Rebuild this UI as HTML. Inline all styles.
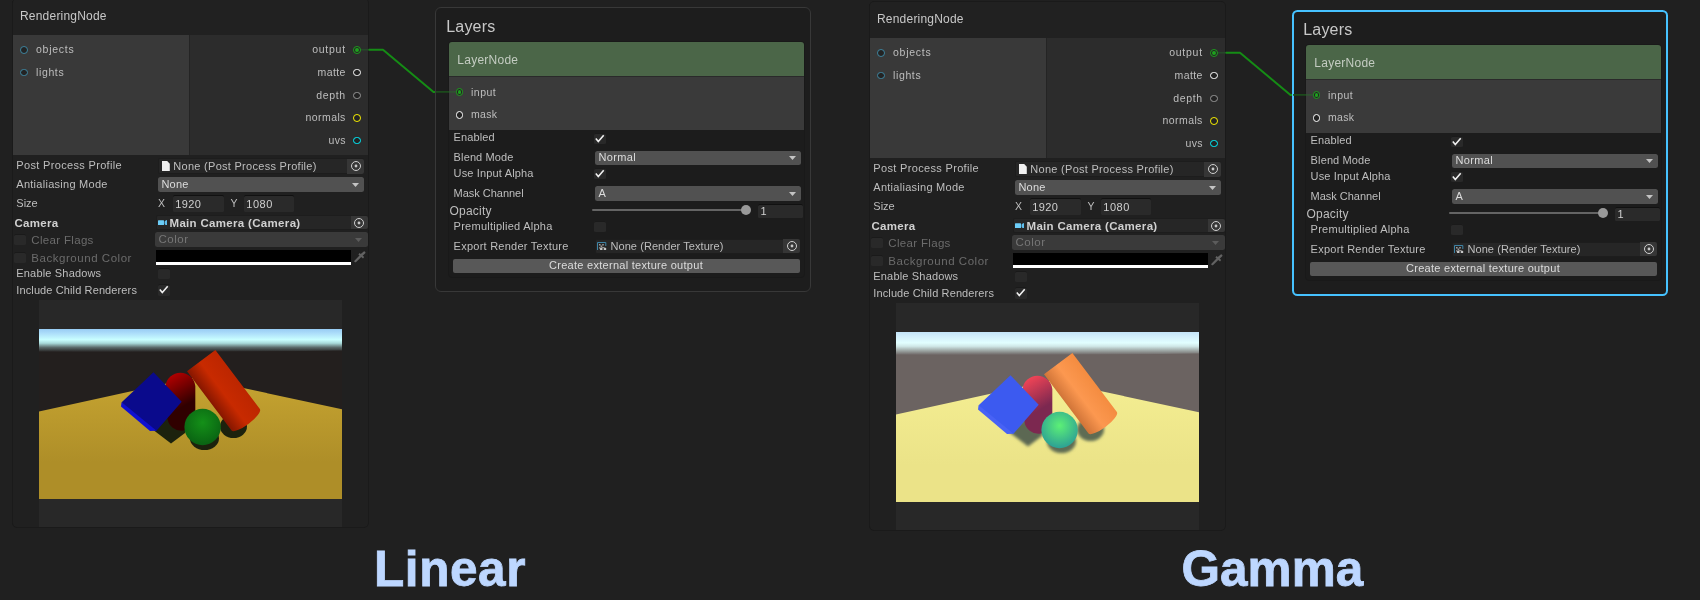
<!DOCTYPE html>
<html><head><meta charset="utf-8"><title>Linear vs Gamma</title>
<style>
html,body{margin:0;padding:0;background:#202020;}
body{width:1700px;height:600px;position:relative;overflow:hidden;font-family:"Liberation Sans", sans-serif;}
.g{position:absolute;width:0;height:0;will-change:transform;}
.b{position:absolute;display:block;}
.t{position:absolute;white-space:nowrap;line-height:20px;}
.cap .t{-webkit-text-stroke:0.8px #bdd7ff;}
</style></head><body>
<div class="g" style="left:0px;top:0px">
<div class="b" style="left:12px;top:-2px;width:357px;height:530px;background:#202020;border:1px solid #1a1a1a;border-radius:5px;box-sizing:border-box;"></div>
<div class="b" style="left:13px;top:-1px;width:355px;height:36px;background:#212121;border-radius:4px 4px 0 0;"></div>
<div class="b" style="left:13px;top:35px;width:176px;height:120px;background:#393939;"></div>
<div class="b" style="left:189px;top:35px;width:1px;height:120px;background:#242424;"></div>
<div class="b" style="left:190px;top:35px;width:178px;height:120px;background:#2c2c2c;"></div>
<div class="b" style="left:20.40px;top:45.80px;width:7.8px;height:7.8px;border-radius:50%;box-sizing:border-box;border:1px solid #3f87a2;background:#232323"></div>
<div class="b" style="left:20.40px;top:68.60px;width:7.8px;height:7.8px;border-radius:50%;box-sizing:border-box;border:1px solid #3f87a2;background:#232323"></div>
<div class="b" style="left:353.10px;top:45.90px;width:7.8px;height:7.8px;border-radius:50%;box-sizing:border-box;border:1.3px solid #1ea01e;background:#232323"></div><div class="b" style="left:355.10px;top:47.90px;width:3.8px;height:3.8px;border-radius:50%;background:#1ea01e"></div>
<div class="b" style="left:353.10px;top:68.50px;width:7.8px;height:7.8px;border-radius:50%;box-sizing:border-box;border:1.7px solid #ffffff;background:#232323"></div>
<div class="b" style="left:353.10px;top:91.60px;width:7.8px;height:7.8px;border-radius:50%;box-sizing:border-box;border:1.1px solid #969696;background:#232323"></div>
<div class="b" style="left:353.10px;top:114.00px;width:7.8px;height:7.8px;border-radius:50%;box-sizing:border-box;border:1.4px solid #fff600;background:#232323"></div>
<div class="b" style="left:353.10px;top:136.70px;width:7.8px;height:7.8px;border-radius:50%;box-sizing:border-box;border:1.4px solid #00f2ff;background:#232323"></div>
<div class="b" style="left:157.7px;top:158.3px;width:206.3px;height:15.8px;background:#262626;border-radius:2px;box-shadow:inset 0 0 0 1px #1d1d1d;"></div><div class="b" style="left:347.0px;top:158.8px;width:17px;height:14.8px;background:#363636;border-radius:0 2px 2px 0;"></div>
<svg class="b" style="left:161.8px;top:160.8px" width="8" height="10.2" viewBox="0 0 8 10.2"><path d="M0 0H5.2L7.8 2.8V10.2H0Z" fill="#f0f0f0"/></svg>
<svg class="b" style="left:349.9px;top:160.4px" width="12" height="12" viewBox="0 0 12 12"><circle cx="6" cy="6" r="4.5" fill="none" stroke="#d0d0d0" stroke-width="1"/><circle cx="6" cy="6" r="1.4" fill="#c8c8c8"/></svg>
<div class="b" style="left:157.7px;top:177px;width:206.3px;height:14.5px;background:#515151;border-radius:2.5px;"></div><svg class="b" style="left:351.5px;top:182.75px" width="7" height="4" viewBox="0 0 7 4"><path d="M0 0H7L3.5 4Z" fill="#c4c4c4"/></svg>
<div class="b" style="left:173px;top:195px;width:51px;height:16.5px;background:#2a2a2a;border-radius:1.5px;box-shadow:inset 0 1px 0 #111;"></div>
<div class="b" style="left:244px;top:195px;width:50px;height:16.5px;background:#2a2a2a;border-radius:1.5px;box-shadow:inset 0 1px 0 #111;"></div>
<div class="b" style="left:156px;top:215px;width:211.5px;height:14.8px;background:#262626;border-radius:2px;box-shadow:inset 0 0 0 1px #1d1d1d;"></div><div class="b" style="left:350.5px;top:215.5px;width:17px;height:13.8px;background:#363636;border-radius:0 2px 2px 0;"></div>
<svg class="b" style="left:158px;top:219.7px" width="9.2" height="5.6" viewBox="0 0 9.2 5.6"><rect y="0.2" width="6" height="5.2" rx="0.5" fill="#6ccdf8"/><path d="M6.6 1.6Q7.6 0.2 9 0V5.6Q7.6 5.4 6.6 4Z" fill="#5fc0f0"/></svg>
<svg class="b" style="left:352.7px;top:216.5px" width="12" height="12" viewBox="0 0 12 12"><circle cx="6" cy="6" r="4.5" fill="none" stroke="#d0d0d0" stroke-width="1"/><circle cx="6" cy="6" r="1.4" fill="#c8c8c8"/></svg>
<div class="b" style="left:155.4px;top:231.5px;width:212.3px;height:15.5px;background:#3a3a3a;border-radius:2.5px;"></div><svg class="b" style="left:355.20000000000005px;top:237.75px" width="7" height="4" viewBox="0 0 7 4"><path d="M0 0H7L3.5 4Z" fill="#5c5c5c"/></svg>
<div class="b" style="left:14px;top:233.7px;width:11.5px;height:11.3px;background:#292929;border-radius:1.5px;box-shadow:inset 0 1px 0 #1a1a1a;"></div>
<div class="b" style="left:14px;top:252px;width:11.5px;height:11.3px;background:#292929;border-radius:1.5px;box-shadow:inset 0 1px 0 #1a1a1a;"></div>
<div class="b" style="left:155.7px;top:250px;width:195.3px;height:12px;background:#000;"></div>
<div class="b" style="left:155.7px;top:262px;width:195.3px;height:3px;background:#fff;"></div>
<svg class="b" style="left:354px;top:251px" width="12" height="12" viewBox="0 0 12 12"><g stroke="#626262" fill="none" stroke-linecap="round"><path d="M1.4 10.2L7 4.6" stroke-width="2.2"/><path d="M7.6 4L10.2 1.6" stroke-width="2.4"/></g><path d="M5 2.8L9.6 6.8" stroke="#626262" stroke-width="1.8"/></svg>
<div class="b" style="left:158px;top:267.5px;width:11.5px;height:11.3px;background:#292929;border-radius:1.5px;box-shadow:inset 0 1px 0 #1a1a1a;"></div>
<div class="b" style="left:158px;top:284.3px;width:11.5px;height:11.3px;background:#292929;border-radius:1.5px;box-shadow:inset 0 1px 0 #1a1a1a;"></div><svg class="b" style="left:158px;top:284.3px" width="12" height="12" viewBox="0 0 12 12"><path d="M1.8 5.6 L4.3 8.5 L9.7 2.3" fill="none" stroke="#f0f0f0" stroke-width="1.6"/></svg>
<div class="b" style="left:39px;top:300px;width:303px;height:227px;background:#282828;"></div>
<svg class="b" style="left:39px;top:329px" width="303" height="170" viewBox="0 0 303 170">
<defs>
<linearGradient id="skylinear" x1="0" y1="0" x2="0" y2="1">
<stop offset="0" stop-color="#98ccf4"/><stop offset="0.2" stop-color="#aedffa"/><stop offset="0.47" stop-color="#c9ffff"/>
<stop offset="0.62" stop-color="#a8dada"/><stop offset="0.8" stop-color="#5c6c6c"/><stop offset="1" stop-color="#252121"/></linearGradient>
<linearGradient id="grlinear" x1="0" y1="0" x2="0" y2="1"><stop offset="0" stop-color="#c6a431"/><stop offset="0.7" stop-color="#ae8e28"/></linearGradient>
<linearGradient id="rdlinear" x1="0" y1="0" x2="0.3" y2="1"><stop offset="0.1" stop-color="#b00000"/><stop offset="0.7" stop-color="#300000"/></linearGradient>
<linearGradient id="cylinear" x1="0" y1="0" x2="1" y2="0"><stop offset="0" stop-color="#861600"/><stop offset="0.45" stop-color="#c82a00"/><stop offset="1" stop-color="#bc2600"/></linearGradient>
<radialGradient id="splinear" cx="0.5" cy="0.38" r="0.65"><stop offset="0" stop-color="#149018"/><stop offset="1" stop-color="#096012"/></radialGradient>
<filter id="bllinear"><feGaussianBlur stdDeviation="0.7"/></filter>
</defs>
<rect width="303" height="170" fill="#231f1e"/>
<path d="M0 0H303V21.5Q151 23.5 0 22.8Z" fill="url(#skylinear)"/>
<path d="M0 82.6 L155 48.5 L303 80.2 V170 H0Z" fill="url(#grlinear)"/>
<g filter="url(#bllinear)">
<path d="M113 100 L132 114.5 L146 104 L150 92 L130 86Z" fill="#1a2210"/>
<ellipse cx="165.5" cy="109.5" rx="14.5" ry="11.5" fill="#1c2410"/>
<ellipse cx="194.5" cy="97.5" rx="13.5" ry="11.5" fill="#1c2410"/>
</g>
<path d="M126.5 57 A15 15 0 0 1 156.3 57 L156.3 88 A14 14 0 0 1 128.5 90Z" fill="url(#rdlinear)"/>
<g transform="translate(148,42.3) rotate(-37)"><path d="M0 0 H35.5 V74 A17.75 5 0 0 1 0 74Z" fill="url(#cylinear)"/></g>
<path d="M82.5 73.3 L82 77.5 L111 102 L117.5 101.8 L114 80Z" fill="#1010d0"/>
<path d="M114.5 43.3 L142.7 72.8 L117.5 101.8 L82.7 73.3Z" fill="#0a0a8c"/>
<circle cx="163.6" cy="98" r="18.2" fill="url(#splinear)"/>
</svg>
<svg class="b" style="left:350px;top:40px" width="120" height="60" viewBox="350 40 120 60"><path d="M361 49.7 H369" fill="none" stroke="#27482a" stroke-width="1.6"/><path d="M368.7 49.7 H383 L433.5 91.9 H435.5" fill="none" stroke="#158c15" stroke-width="2" stroke-linejoin="round"/></svg>
<div class="b" style="left:435px;top:7px;width:376px;height:285px;background:#1d1d1d;border:1px solid #383838;border-radius:6px;box-sizing:border-box;"></div>
<div class="b" style="left:448px;top:41px;width:357px;height:237px;background:#1c1c1c;border:1px solid #191919;border-radius:4px;box-sizing:border-box;"></div>
<div class="b" style="left:449px;top:42px;width:355px;height:34px;background:#4b6648;border-radius:3px 3px 0 0;"></div>
<div class="b" style="left:449px;top:76px;width:355px;height:1px;background:#2a2a2a;"></div>
<div class="b" style="left:449px;top:77px;width:355px;height:53px;background:#3a3a3a;"></div>
<svg class="b" style="left:435px;top:88px" width="26" height="8" viewBox="435 88 26 8"><path d="M436 91.9 H449" fill="none" stroke="#1c501c" stroke-width="1.6"/><path d="M449 91.9 H456" fill="none" stroke="#2f5a30" stroke-width="1.3"/></svg>
<div class="b" style="left:455.70px;top:88.30px;width:7.8px;height:7.8px;border-radius:50%;box-sizing:border-box;border:1.3px solid #1ea01e;background:#232323"></div><div class="b" style="left:457.70px;top:90.30px;width:3.8px;height:3.8px;border-radius:50%;background:#1ea01e"></div>
<div class="b" style="left:455.70px;top:111.10px;width:7.8px;height:7.8px;border-radius:50%;box-sizing:border-box;border:1.7px solid #ffffff;background:#232323"></div>
<div class="b" style="left:594.3px;top:133px;width:11.5px;height:11.3px;background:#292929;border-radius:1.5px;box-shadow:inset 0 1px 0 #1a1a1a;"></div><svg class="b" style="left:594.3px;top:133px" width="12" height="12" viewBox="0 0 12 12"><path d="M1.8 5.6 L4.3 8.5 L9.7 2.3" fill="none" stroke="#f0f0f0" stroke-width="1.6"/></svg>
<div class="b" style="left:595px;top:150.7px;width:206px;height:14px;background:#515151;border-radius:2.5px;"></div><svg class="b" style="left:788.5px;top:156.2px" width="7" height="4" viewBox="0 0 7 4"><path d="M0 0H7L3.5 4Z" fill="#c4c4c4"/></svg>
<div class="b" style="left:594.3px;top:167.8px;width:11.5px;height:11.3px;background:#292929;border-radius:1.5px;box-shadow:inset 0 1px 0 #1a1a1a;"></div><svg class="b" style="left:594.3px;top:167.8px" width="12" height="12" viewBox="0 0 12 12"><path d="M1.8 5.6 L4.3 8.5 L9.7 2.3" fill="none" stroke="#f0f0f0" stroke-width="1.6"/></svg>
<div class="b" style="left:595px;top:186px;width:206px;height:14.5px;background:#515151;border-radius:2.5px;"></div><svg class="b" style="left:788.5px;top:191.75px" width="7" height="4" viewBox="0 0 7 4"><path d="M0 0H7L3.5 4Z" fill="#c4c4c4"/></svg>
<div class="b" style="left:592px;top:209.4px;width:155px;height:1.8px;background:#646464;border-radius:1px;"></div>
<div class="b" style="left:741.3px;top:205.4px;width:10px;height:10px;background:#999999;border-radius:50%;"></div>
<div class="b" style="left:757.7px;top:203.5px;width:45px;height:14.5px;background:#2a2a2a;border-radius:1.5px;box-shadow:inset 0 1px 0 #111;"></div>
<div class="b" style="left:594.3px;top:220.5px;width:11.5px;height:11.3px;background:#292929;border-radius:1.5px;box-shadow:inset 0 1px 0 #1a1a1a;"></div>
<div class="b" style="left:595px;top:238.8px;width:205px;height:15.2px;background:#262626;border-radius:2px;box-shadow:inset 0 0 0 1px #1d1d1d;"></div><div class="b" style="left:783px;top:239.3px;width:17px;height:14.2px;background:#363636;border-radius:0 2px 2px 0;"></div>
<svg class="b" style="left:597px;top:241.7px" width="9.5" height="8.8" viewBox="0 0 9.5 8.8"><path d="M0.5 8V0.5H8.8V4" fill="none" stroke="#3f86a8" stroke-width="1"/><path d="M2 2h1.6v1.6H2zM5.2 2h1.6v1.6H5.2zM3.6 3.6h1.6v1.6H3.6zM2 5.2h1.4v1.2H2z" fill="#9a9a9a"/><ellipse cx="6.1" cy="7" rx="3.2" ry="1.8" fill="#c8c8c8"/><circle cx="6.1" cy="7" r="1" fill="#3a3a3a"/></svg>
<svg class="b" style="left:785.5px;top:240.4px" width="12" height="12" viewBox="0 0 12 12"><circle cx="6" cy="6" r="4.5" fill="none" stroke="#d0d0d0" stroke-width="1"/><circle cx="6" cy="6" r="1.4" fill="#c8c8c8"/></svg>
<div class="b" style="left:452.7px;top:259px;width:347px;height:14px;background:#585858;border-radius:2px;"></div>
<span class="t" style="left:20.00px;top:6.00px;font-size:12px;color:#c8c8c8;letter-spacing:0.203px;">RenderingNode</span>
<span class="t" style="left:36.00px;top:39.00px;font-size:10.5px;color:#bebebe;letter-spacing:0.731px;">objects</span>
<span class="t" style="left:36.00px;top:62.00px;font-size:10.5px;color:#bebebe;letter-spacing:0.631px;">lights</span>
<span class="t" style="left:312.20px;top:39.00px;font-size:10.5px;color:#bebebe;letter-spacing:0.733px;">output</span>
<span class="t" style="left:317.60px;top:62.00px;font-size:10.5px;color:#bebebe;letter-spacing:0.387px;">matte</span>
<span class="t" style="left:316.20px;top:85.00px;font-size:10.5px;color:#bebebe;letter-spacing:0.664px;">depth</span>
<span class="t" style="left:305.60px;top:107.00px;font-size:10.5px;color:#bebebe;letter-spacing:0.406px;">normals</span>
<span class="t" style="left:328.60px;top:130.00px;font-size:10.5px;color:#bebebe;letter-spacing:0.285px;">uvs</span>
<span class="t" style="left:16.30px;top:155.00px;font-size:11px;color:#bebebe;letter-spacing:0.333px;">Post Process Profile</span>
<span class="t" style="left:16.30px;top:174.00px;font-size:11px;color:#bebebe;letter-spacing:0.268px;">Antialiasing Mode</span>
<span class="t" style="left:16.30px;top:193.00px;font-size:11px;color:#bebebe;">Size</span>
<span class="t" style="left:14.40px;top:213.00px;font-size:11.5px;color:#d0d0d0;letter-spacing:0.299px;font-weight:bold;">Camera</span>
<span class="t" style="left:31.30px;top:230.00px;font-size:11.5px;color:#6b6b6b;letter-spacing:0.326px;">Clear Flags</span>
<span class="t" style="left:31.30px;top:248.00px;font-size:11.5px;color:#6b6b6b;letter-spacing:0.540px;">Background Color</span>
<span class="t" style="left:16.30px;top:263.00px;font-size:11px;color:#bebebe;letter-spacing:0.174px;">Enable Shadows</span>
<span class="t" style="left:16.30px;top:280.00px;font-size:11px;color:#bebebe;letter-spacing:0.117px;">Include Child Renderers</span>
<span class="t" style="left:173.30px;top:156.00px;font-size:11px;color:#bebebe;letter-spacing:0.284px;">None (Post Process Profile)</span>
<span class="t" style="left:161.50px;top:174.00px;font-size:11px;color:#dcdcdc;letter-spacing:0.176px;">None</span>
<span class="t" style="left:158.00px;top:193.00px;font-size:10.5px;color:#bebebe;">X</span>
<span class="t" style="left:175.30px;top:194.00px;font-size:11px;color:#d0d0d0;letter-spacing:0.404px;">1920</span>
<span class="t" style="left:230.50px;top:193.00px;font-size:10.5px;color:#bebebe;">Y</span>
<span class="t" style="left:246.30px;top:194.00px;font-size:11px;color:#d0d0d0;letter-spacing:0.529px;">1080</span>
<span class="t" style="left:169.50px;top:213.00px;font-size:11.5px;color:#d0d0d0;letter-spacing:0.318px;font-weight:bold;">Main Camera (Camera)</span>
<span class="t" style="left:158.50px;top:229.00px;font-size:11.5px;color:#767676;letter-spacing:0.503px;">Color</span>
<span class="t" style="left:446.20px;top:16.50px;font-size:16px;color:#c8c8c8;letter-spacing:0.211px;">Layers</span>
<span class="t" style="left:457.30px;top:50.00px;font-size:12px;color:#c4ccc2;letter-spacing:0.253px;">LayerNode</span>
<span class="t" style="left:471.00px;top:82.00px;font-size:10.5px;color:#bebebe;letter-spacing:0.484px;">input</span>
<span class="t" style="left:471.00px;top:104.00px;font-size:10.5px;color:#bebebe;letter-spacing:0.327px;">mask</span>
<span class="t" style="left:453.60px;top:127.00px;font-size:11px;color:#bebebe;letter-spacing:0.089px;">Enabled</span>
<span class="t" style="left:453.60px;top:147.00px;font-size:11px;color:#bebebe;letter-spacing:0.128px;">Blend Mode</span>
<span class="t" style="left:453.60px;top:163.00px;font-size:11px;color:#bebebe;letter-spacing:0.155px;">Use Input Alpha</span>
<span class="t" style="left:453.60px;top:183.00px;font-size:11px;color:#bebebe;letter-spacing:-0.027px;">Mask Channel</span>
<span class="t" style="left:449.60px;top:201.00px;font-size:12px;color:#bebebe;letter-spacing:0.188px;">Opacity</span>
<span class="t" style="left:453.60px;top:216.00px;font-size:11px;color:#bebebe;letter-spacing:0.254px;">Premultiplied Alpha</span>
<span class="t" style="left:453.60px;top:236.00px;font-size:11px;color:#bebebe;letter-spacing:0.245px;">Export Render Texture</span>
<span class="t" style="left:598.50px;top:147.00px;font-size:11px;color:#dcdcdc;letter-spacing:0.341px;">Normal</span>
<span class="t" style="left:598.50px;top:183.00px;font-size:11px;color:#dcdcdc;">A</span>
<span class="t" style="left:760.50px;top:201.00px;font-size:11px;color:#d0d0d0;">1</span>
<span class="t" style="left:610.50px;top:236.00px;font-size:11px;color:#bebebe;letter-spacing:0.062px;">None (Render Texture)</span>
<span class="t" style="left:549.00px;top:255.00px;font-size:11px;color:#dcdcdc;letter-spacing:0.282px;">Create external texture output</span>
</div>
<div class="g" style="left:857px;top:3px">
<div class="b" style="left:12px;top:-2px;width:357px;height:530px;background:#202020;border:1px solid #1a1a1a;border-radius:5px;box-sizing:border-box;"></div>
<div class="b" style="left:13px;top:-1px;width:355px;height:36px;background:#212121;border-radius:4px 4px 0 0;"></div>
<div class="b" style="left:13px;top:35px;width:176px;height:120px;background:#393939;"></div>
<div class="b" style="left:189px;top:35px;width:1px;height:120px;background:#242424;"></div>
<div class="b" style="left:190px;top:35px;width:178px;height:120px;background:#2c2c2c;"></div>
<div class="b" style="left:20.40px;top:45.80px;width:7.8px;height:7.8px;border-radius:50%;box-sizing:border-box;border:1px solid #3f87a2;background:#232323"></div>
<div class="b" style="left:20.40px;top:68.60px;width:7.8px;height:7.8px;border-radius:50%;box-sizing:border-box;border:1px solid #3f87a2;background:#232323"></div>
<div class="b" style="left:353.10px;top:45.90px;width:7.8px;height:7.8px;border-radius:50%;box-sizing:border-box;border:1.3px solid #1ea01e;background:#232323"></div><div class="b" style="left:355.10px;top:47.90px;width:3.8px;height:3.8px;border-radius:50%;background:#1ea01e"></div>
<div class="b" style="left:353.10px;top:68.50px;width:7.8px;height:7.8px;border-radius:50%;box-sizing:border-box;border:1.7px solid #ffffff;background:#232323"></div>
<div class="b" style="left:353.10px;top:91.60px;width:7.8px;height:7.8px;border-radius:50%;box-sizing:border-box;border:1.1px solid #969696;background:#232323"></div>
<div class="b" style="left:353.10px;top:114.00px;width:7.8px;height:7.8px;border-radius:50%;box-sizing:border-box;border:1.4px solid #fff600;background:#232323"></div>
<div class="b" style="left:353.10px;top:136.70px;width:7.8px;height:7.8px;border-radius:50%;box-sizing:border-box;border:1.4px solid #00f2ff;background:#232323"></div>
<div class="b" style="left:157.7px;top:158.3px;width:206.3px;height:15.8px;background:#262626;border-radius:2px;box-shadow:inset 0 0 0 1px #1d1d1d;"></div><div class="b" style="left:347.0px;top:158.8px;width:17px;height:14.8px;background:#363636;border-radius:0 2px 2px 0;"></div>
<svg class="b" style="left:161.8px;top:160.8px" width="8" height="10.2" viewBox="0 0 8 10.2"><path d="M0 0H5.2L7.8 2.8V10.2H0Z" fill="#f0f0f0"/></svg>
<svg class="b" style="left:349.9px;top:160.4px" width="12" height="12" viewBox="0 0 12 12"><circle cx="6" cy="6" r="4.5" fill="none" stroke="#d0d0d0" stroke-width="1"/><circle cx="6" cy="6" r="1.4" fill="#c8c8c8"/></svg>
<div class="b" style="left:157.7px;top:177px;width:206.3px;height:14.5px;background:#515151;border-radius:2.5px;"></div><svg class="b" style="left:351.5px;top:182.75px" width="7" height="4" viewBox="0 0 7 4"><path d="M0 0H7L3.5 4Z" fill="#c4c4c4"/></svg>
<div class="b" style="left:173px;top:195px;width:51px;height:16.5px;background:#2a2a2a;border-radius:1.5px;box-shadow:inset 0 1px 0 #111;"></div>
<div class="b" style="left:244px;top:195px;width:50px;height:16.5px;background:#2a2a2a;border-radius:1.5px;box-shadow:inset 0 1px 0 #111;"></div>
<div class="b" style="left:156px;top:215px;width:211.5px;height:14.8px;background:#262626;border-radius:2px;box-shadow:inset 0 0 0 1px #1d1d1d;"></div><div class="b" style="left:350.5px;top:215.5px;width:17px;height:13.8px;background:#363636;border-radius:0 2px 2px 0;"></div>
<svg class="b" style="left:158px;top:219.7px" width="9.2" height="5.6" viewBox="0 0 9.2 5.6"><rect y="0.2" width="6" height="5.2" rx="0.5" fill="#6ccdf8"/><path d="M6.6 1.6Q7.6 0.2 9 0V5.6Q7.6 5.4 6.6 4Z" fill="#5fc0f0"/></svg>
<svg class="b" style="left:352.7px;top:216.5px" width="12" height="12" viewBox="0 0 12 12"><circle cx="6" cy="6" r="4.5" fill="none" stroke="#d0d0d0" stroke-width="1"/><circle cx="6" cy="6" r="1.4" fill="#c8c8c8"/></svg>
<div class="b" style="left:155.4px;top:231.5px;width:212.3px;height:15.5px;background:#3a3a3a;border-radius:2.5px;"></div><svg class="b" style="left:355.20000000000005px;top:237.75px" width="7" height="4" viewBox="0 0 7 4"><path d="M0 0H7L3.5 4Z" fill="#5c5c5c"/></svg>
<div class="b" style="left:14px;top:233.7px;width:11.5px;height:11.3px;background:#292929;border-radius:1.5px;box-shadow:inset 0 1px 0 #1a1a1a;"></div>
<div class="b" style="left:14px;top:252px;width:11.5px;height:11.3px;background:#292929;border-radius:1.5px;box-shadow:inset 0 1px 0 #1a1a1a;"></div>
<div class="b" style="left:155.7px;top:250px;width:195.3px;height:12px;background:#000;"></div>
<div class="b" style="left:155.7px;top:262px;width:195.3px;height:3px;background:#fff;"></div>
<svg class="b" style="left:354px;top:251px" width="12" height="12" viewBox="0 0 12 12"><g stroke="#626262" fill="none" stroke-linecap="round"><path d="M1.4 10.2L7 4.6" stroke-width="2.2"/><path d="M7.6 4L10.2 1.6" stroke-width="2.4"/></g><path d="M5 2.8L9.6 6.8" stroke="#626262" stroke-width="1.8"/></svg>
<div class="b" style="left:158px;top:267.5px;width:11.5px;height:11.3px;background:#292929;border-radius:1.5px;box-shadow:inset 0 1px 0 #1a1a1a;"></div>
<div class="b" style="left:158px;top:284.3px;width:11.5px;height:11.3px;background:#292929;border-radius:1.5px;box-shadow:inset 0 1px 0 #1a1a1a;"></div><svg class="b" style="left:158px;top:284.3px" width="12" height="12" viewBox="0 0 12 12"><path d="M1.8 5.6 L4.3 8.5 L9.7 2.3" fill="none" stroke="#f0f0f0" stroke-width="1.6"/></svg>
<div class="b" style="left:39px;top:300px;width:303px;height:227px;background:#282828;"></div>
<svg class="b" style="left:39px;top:329px" width="303" height="170" viewBox="0 0 303 170">
<defs>
<linearGradient id="skygamma" x1="0" y1="0" x2="0" y2="1">
<stop offset="0" stop-color="#c4e4f8"/><stop offset="0.2" stop-color="#d2effc"/><stop offset="0.47" stop-color="#e2ffff"/>
<stop offset="0.62" stop-color="#d0e8e8"/><stop offset="0.8" stop-color="#a0aaa8"/><stop offset="1" stop-color="#6c6463"/></linearGradient>
<linearGradient id="grgamma" x1="0" y1="0" x2="0" y2="1"><stop offset="0" stop-color="#f4ee92"/><stop offset="0.7" stop-color="#ebe388"/></linearGradient>
<linearGradient id="rdgamma" x1="0" y1="0" x2="0.3" y2="1"><stop offset="0.1" stop-color="#f04456"/><stop offset="0.7" stop-color="#7c2850"/></linearGradient>
<linearGradient id="cygamma" x1="0" y1="0" x2="1" y2="0"><stop offset="0" stop-color="#d07438"/><stop offset="0.45" stop-color="#fc9850"/><stop offset="1" stop-color="#f48c40"/></linearGradient>
<radialGradient id="spgamma" cx="0.5" cy="0.38" r="0.65"><stop offset="0" stop-color="#5cf076"/><stop offset="1" stop-color="#2a9c96"/></radialGradient>
<filter id="blgamma"><feGaussianBlur stdDeviation="1.5"/></filter>
</defs>
<rect width="303" height="170" fill="#6b6361"/>
<path d="M0 0H303V21.5Q151 23.5 0 22.8Z" fill="url(#skygamma)"/>
<path d="M0 82.6 L155 48.5 L303 80.2 V170 H0Z" fill="url(#grgamma)"/>
<g filter="url(#blgamma)">
<path d="M113 100 L132 114.5 L146 104 L150 92 L130 86Z" fill="#5c6852"/>
<ellipse cx="165.5" cy="109.5" rx="14.5" ry="11.5" fill="#5e6c52"/>
<ellipse cx="194.5" cy="97.5" rx="13.5" ry="11.5" fill="#5e6c52"/>
</g>
<path d="M126.5 57 A15 15 0 0 1 156.3 57 L156.3 88 A14 14 0 0 1 128.5 90Z" fill="url(#rdgamma)"/>
<g transform="translate(148,42.3) rotate(-37)"><path d="M0 0 H35.5 V74 A17.75 5 0 0 1 0 74Z" fill="url(#cygamma)"/></g>
<path d="M82.5 73.3 L82 77.5 L111 102 L117.5 101.8 L114 80Z" fill="#4862f5"/>
<path d="M114.5 43.3 L142.7 72.8 L117.5 101.8 L82.7 73.3Z" fill="#3c5af0"/>
<circle cx="163.6" cy="98" r="18.2" fill="url(#spgamma)"/>
</svg>
<svg class="b" style="left:350px;top:40px" width="120" height="60" viewBox="350 40 120 60"><path d="M361 49.7 H369" fill="none" stroke="#27482a" stroke-width="1.6"/><path d="M368.7 49.7 H383 L433.5 91.9 H435.5" fill="none" stroke="#158c15" stroke-width="2" stroke-linejoin="round"/></svg>
<div class="b" style="left:435px;top:6.75px;width:376.25px;height:286.25px;background:#1d1d1d;border:2.2px solid #46c2ff;border-radius:5.5px;box-sizing:border-box;"></div>
<div class="b" style="left:448px;top:41px;width:357px;height:237px;background:#1c1c1c;border:1px solid #191919;border-radius:4px;box-sizing:border-box;"></div>
<div class="b" style="left:449px;top:42px;width:355px;height:34px;background:#4b6648;border-radius:3px 3px 0 0;"></div>
<div class="b" style="left:449px;top:76px;width:355px;height:1px;background:#2a2a2a;"></div>
<div class="b" style="left:449px;top:77px;width:355px;height:53px;background:#3a3a3a;"></div>
<svg class="b" style="left:435px;top:88px" width="26" height="8" viewBox="435 88 26 8"><path d="M436 91.9 H449" fill="none" stroke="#1c501c" stroke-width="1.6"/><path d="M449 91.9 H456" fill="none" stroke="#2f5a30" stroke-width="1.3"/></svg>
<div class="b" style="left:455.70px;top:88.30px;width:7.8px;height:7.8px;border-radius:50%;box-sizing:border-box;border:1.3px solid #1ea01e;background:#232323"></div><div class="b" style="left:457.70px;top:90.30px;width:3.8px;height:3.8px;border-radius:50%;background:#1ea01e"></div>
<div class="b" style="left:455.70px;top:111.10px;width:7.8px;height:7.8px;border-radius:50%;box-sizing:border-box;border:1.7px solid #ffffff;background:#232323"></div>
<div class="b" style="left:594.3px;top:133px;width:11.5px;height:11.3px;background:#292929;border-radius:1.5px;box-shadow:inset 0 1px 0 #1a1a1a;"></div><svg class="b" style="left:594.3px;top:133px" width="12" height="12" viewBox="0 0 12 12"><path d="M1.8 5.6 L4.3 8.5 L9.7 2.3" fill="none" stroke="#f0f0f0" stroke-width="1.6"/></svg>
<div class="b" style="left:595px;top:150.7px;width:206px;height:14px;background:#515151;border-radius:2.5px;"></div><svg class="b" style="left:788.5px;top:156.2px" width="7" height="4" viewBox="0 0 7 4"><path d="M0 0H7L3.5 4Z" fill="#c4c4c4"/></svg>
<div class="b" style="left:594.3px;top:167.8px;width:11.5px;height:11.3px;background:#292929;border-radius:1.5px;box-shadow:inset 0 1px 0 #1a1a1a;"></div><svg class="b" style="left:594.3px;top:167.8px" width="12" height="12" viewBox="0 0 12 12"><path d="M1.8 5.6 L4.3 8.5 L9.7 2.3" fill="none" stroke="#f0f0f0" stroke-width="1.6"/></svg>
<div class="b" style="left:595px;top:186px;width:206px;height:14.5px;background:#515151;border-radius:2.5px;"></div><svg class="b" style="left:788.5px;top:191.75px" width="7" height="4" viewBox="0 0 7 4"><path d="M0 0H7L3.5 4Z" fill="#c4c4c4"/></svg>
<div class="b" style="left:592px;top:209.4px;width:155px;height:1.8px;background:#646464;border-radius:1px;"></div>
<div class="b" style="left:741.3px;top:205.4px;width:10px;height:10px;background:#999999;border-radius:50%;"></div>
<div class="b" style="left:757.7px;top:203.5px;width:45px;height:14.5px;background:#2a2a2a;border-radius:1.5px;box-shadow:inset 0 1px 0 #111;"></div>
<div class="b" style="left:594.3px;top:220.5px;width:11.5px;height:11.3px;background:#292929;border-radius:1.5px;box-shadow:inset 0 1px 0 #1a1a1a;"></div>
<div class="b" style="left:595px;top:238.8px;width:205px;height:15.2px;background:#262626;border-radius:2px;box-shadow:inset 0 0 0 1px #1d1d1d;"></div><div class="b" style="left:783px;top:239.3px;width:17px;height:14.2px;background:#363636;border-radius:0 2px 2px 0;"></div>
<svg class="b" style="left:597px;top:241.7px" width="9.5" height="8.8" viewBox="0 0 9.5 8.8"><path d="M0.5 8V0.5H8.8V4" fill="none" stroke="#3f86a8" stroke-width="1"/><path d="M2 2h1.6v1.6H2zM5.2 2h1.6v1.6H5.2zM3.6 3.6h1.6v1.6H3.6zM2 5.2h1.4v1.2H2z" fill="#9a9a9a"/><ellipse cx="6.1" cy="7" rx="3.2" ry="1.8" fill="#c8c8c8"/><circle cx="6.1" cy="7" r="1" fill="#3a3a3a"/></svg>
<svg class="b" style="left:785.5px;top:240.4px" width="12" height="12" viewBox="0 0 12 12"><circle cx="6" cy="6" r="4.5" fill="none" stroke="#d0d0d0" stroke-width="1"/><circle cx="6" cy="6" r="1.4" fill="#c8c8c8"/></svg>
<div class="b" style="left:452.7px;top:259px;width:347px;height:14px;background:#585858;border-radius:2px;"></div>
<span class="t" style="left:20.00px;top:6.00px;font-size:12px;color:#c8c8c8;letter-spacing:0.203px;">RenderingNode</span>
<span class="t" style="left:36.00px;top:39.00px;font-size:10.5px;color:#bebebe;letter-spacing:0.731px;">objects</span>
<span class="t" style="left:36.00px;top:62.00px;font-size:10.5px;color:#bebebe;letter-spacing:0.631px;">lights</span>
<span class="t" style="left:312.20px;top:39.00px;font-size:10.5px;color:#bebebe;letter-spacing:0.733px;">output</span>
<span class="t" style="left:317.60px;top:62.00px;font-size:10.5px;color:#bebebe;letter-spacing:0.387px;">matte</span>
<span class="t" style="left:316.20px;top:85.00px;font-size:10.5px;color:#bebebe;letter-spacing:0.664px;">depth</span>
<span class="t" style="left:305.60px;top:107.00px;font-size:10.5px;color:#bebebe;letter-spacing:0.406px;">normals</span>
<span class="t" style="left:328.60px;top:130.00px;font-size:10.5px;color:#bebebe;letter-spacing:0.285px;">uvs</span>
<span class="t" style="left:16.30px;top:155.00px;font-size:11px;color:#bebebe;letter-spacing:0.333px;">Post Process Profile</span>
<span class="t" style="left:16.30px;top:174.00px;font-size:11px;color:#bebebe;letter-spacing:0.268px;">Antialiasing Mode</span>
<span class="t" style="left:16.30px;top:193.00px;font-size:11px;color:#bebebe;">Size</span>
<span class="t" style="left:14.40px;top:213.00px;font-size:11.5px;color:#d0d0d0;letter-spacing:0.299px;font-weight:bold;">Camera</span>
<span class="t" style="left:31.30px;top:230.00px;font-size:11.5px;color:#6b6b6b;letter-spacing:0.326px;">Clear Flags</span>
<span class="t" style="left:31.30px;top:248.00px;font-size:11.5px;color:#6b6b6b;letter-spacing:0.540px;">Background Color</span>
<span class="t" style="left:16.30px;top:263.00px;font-size:11px;color:#bebebe;letter-spacing:0.174px;">Enable Shadows</span>
<span class="t" style="left:16.30px;top:280.00px;font-size:11px;color:#bebebe;letter-spacing:0.117px;">Include Child Renderers</span>
<span class="t" style="left:173.30px;top:156.00px;font-size:11px;color:#bebebe;letter-spacing:0.284px;">None (Post Process Profile)</span>
<span class="t" style="left:161.50px;top:174.00px;font-size:11px;color:#dcdcdc;letter-spacing:0.176px;">None</span>
<span class="t" style="left:158.00px;top:193.00px;font-size:10.5px;color:#bebebe;">X</span>
<span class="t" style="left:175.30px;top:194.00px;font-size:11px;color:#d0d0d0;letter-spacing:0.404px;">1920</span>
<span class="t" style="left:230.50px;top:193.00px;font-size:10.5px;color:#bebebe;">Y</span>
<span class="t" style="left:246.30px;top:194.00px;font-size:11px;color:#d0d0d0;letter-spacing:0.529px;">1080</span>
<span class="t" style="left:169.50px;top:213.00px;font-size:11.5px;color:#d0d0d0;letter-spacing:0.318px;font-weight:bold;">Main Camera (Camera)</span>
<span class="t" style="left:158.50px;top:229.00px;font-size:11.5px;color:#767676;letter-spacing:0.503px;">Color</span>
<span class="t" style="left:446.20px;top:16.50px;font-size:16px;color:#c8c8c8;letter-spacing:0.211px;">Layers</span>
<span class="t" style="left:457.30px;top:50.00px;font-size:12px;color:#c4ccc2;letter-spacing:0.253px;">LayerNode</span>
<span class="t" style="left:471.00px;top:82.00px;font-size:10.5px;color:#bebebe;letter-spacing:0.484px;">input</span>
<span class="t" style="left:471.00px;top:104.00px;font-size:10.5px;color:#bebebe;letter-spacing:0.327px;">mask</span>
<span class="t" style="left:453.60px;top:127.00px;font-size:11px;color:#bebebe;letter-spacing:0.089px;">Enabled</span>
<span class="t" style="left:453.60px;top:147.00px;font-size:11px;color:#bebebe;letter-spacing:0.128px;">Blend Mode</span>
<span class="t" style="left:453.60px;top:163.00px;font-size:11px;color:#bebebe;letter-spacing:0.155px;">Use Input Alpha</span>
<span class="t" style="left:453.60px;top:183.00px;font-size:11px;color:#bebebe;letter-spacing:-0.027px;">Mask Channel</span>
<span class="t" style="left:449.60px;top:201.00px;font-size:12px;color:#bebebe;letter-spacing:0.188px;">Opacity</span>
<span class="t" style="left:453.60px;top:216.00px;font-size:11px;color:#bebebe;letter-spacing:0.254px;">Premultiplied Alpha</span>
<span class="t" style="left:453.60px;top:236.00px;font-size:11px;color:#bebebe;letter-spacing:0.245px;">Export Render Texture</span>
<span class="t" style="left:598.50px;top:147.00px;font-size:11px;color:#dcdcdc;letter-spacing:0.341px;">Normal</span>
<span class="t" style="left:598.50px;top:183.00px;font-size:11px;color:#dcdcdc;">A</span>
<span class="t" style="left:760.50px;top:201.00px;font-size:11px;color:#d0d0d0;">1</span>
<span class="t" style="left:610.50px;top:236.00px;font-size:11px;color:#bebebe;letter-spacing:0.062px;">None (Render Texture)</span>
<span class="t" style="left:549.00px;top:255.00px;font-size:11px;color:#dcdcdc;letter-spacing:0.282px;">Create external texture output</span>
</div>
<div class="g cap" style="left:0;top:0"><span class="t" style="left:374.00px;top:558.50px;font-size:49.5px;color:#bdd7ff;letter-spacing:0.573px;font-weight:bold;">Linear</span><span class="t" style="left:1181.40px;top:558.50px;font-size:49.5px;color:#bdd7ff;letter-spacing:0.081px;font-weight:bold;">Gamma</span></div>
</body></html>
